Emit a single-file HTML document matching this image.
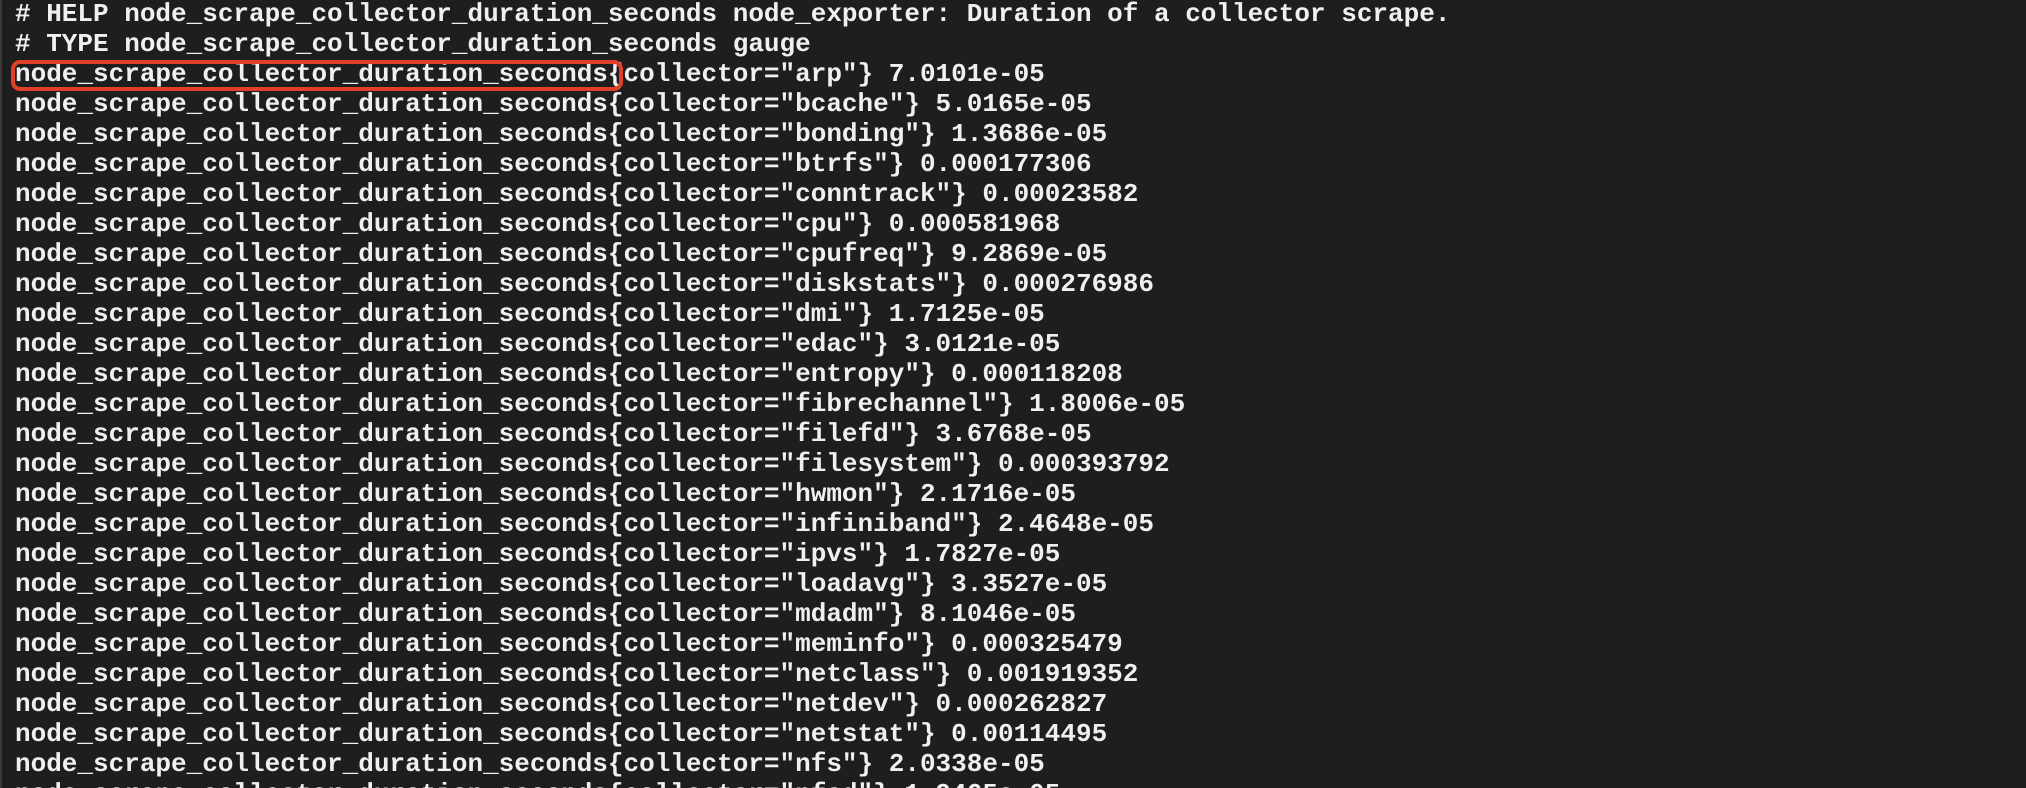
<!DOCTYPE html>
<html><head><meta charset="utf-8"><style>
html,body{margin:0;padding:0;background:#1e1e1e;width:2026px;height:788px;overflow:hidden}
.wrap{position:relative;width:2026px;height:788px;overflow:hidden}
pre{position:absolute;left:15px;top:-1px;margin:0;font-family:"Liberation Mono",monospace;font-weight:bold;font-size:26px;line-height:30px;color:#f0f0f0}
.edge{position:absolute;left:0;top:0;width:2px;height:788px;background:#3a3a3a}
.box{position:absolute;left:11px;top:60px;width:612px;height:31px;border:4px solid #e0402a;border-radius:9px;box-sizing:border-box}
</style></head><body><div class="wrap">
<div class="edge"></div>
<pre># HELP node_scrape_collector_duration_seconds node_exporter: Duration of a collector scrape.
# TYPE node_scrape_collector_duration_seconds gauge
node_scrape_collector_duration_seconds{collector="arp"} 7.0101e-05
node_scrape_collector_duration_seconds{collector="bcache"} 5.0165e-05
node_scrape_collector_duration_seconds{collector="bonding"} 1.3686e-05
node_scrape_collector_duration_seconds{collector="btrfs"} 0.000177306
node_scrape_collector_duration_seconds{collector="conntrack"} 0.00023582
node_scrape_collector_duration_seconds{collector="cpu"} 0.000581968
node_scrape_collector_duration_seconds{collector="cpufreq"} 9.2869e-05
node_scrape_collector_duration_seconds{collector="diskstats"} 0.000276986
node_scrape_collector_duration_seconds{collector="dmi"} 1.7125e-05
node_scrape_collector_duration_seconds{collector="edac"} 3.0121e-05
node_scrape_collector_duration_seconds{collector="entropy"} 0.000118208
node_scrape_collector_duration_seconds{collector="fibrechannel"} 1.8006e-05
node_scrape_collector_duration_seconds{collector="filefd"} 3.6768e-05
node_scrape_collector_duration_seconds{collector="filesystem"} 0.000393792
node_scrape_collector_duration_seconds{collector="hwmon"} 2.1716e-05
node_scrape_collector_duration_seconds{collector="infiniband"} 2.4648e-05
node_scrape_collector_duration_seconds{collector="ipvs"} 1.7827e-05
node_scrape_collector_duration_seconds{collector="loadavg"} 3.3527e-05
node_scrape_collector_duration_seconds{collector="mdadm"} 8.1046e-05
node_scrape_collector_duration_seconds{collector="meminfo"} 0.000325479
node_scrape_collector_duration_seconds{collector="netclass"} 0.001919352
node_scrape_collector_duration_seconds{collector="netdev"} 0.000262827
node_scrape_collector_duration_seconds{collector="netstat"} 0.00114495
node_scrape_collector_duration_seconds{collector="nfs"} 2.0338e-05
node_scrape_collector_duration_seconds{collector="nfsd"} 1.9465e-05</pre>
<div class="box"></div>
</div></body></html>
